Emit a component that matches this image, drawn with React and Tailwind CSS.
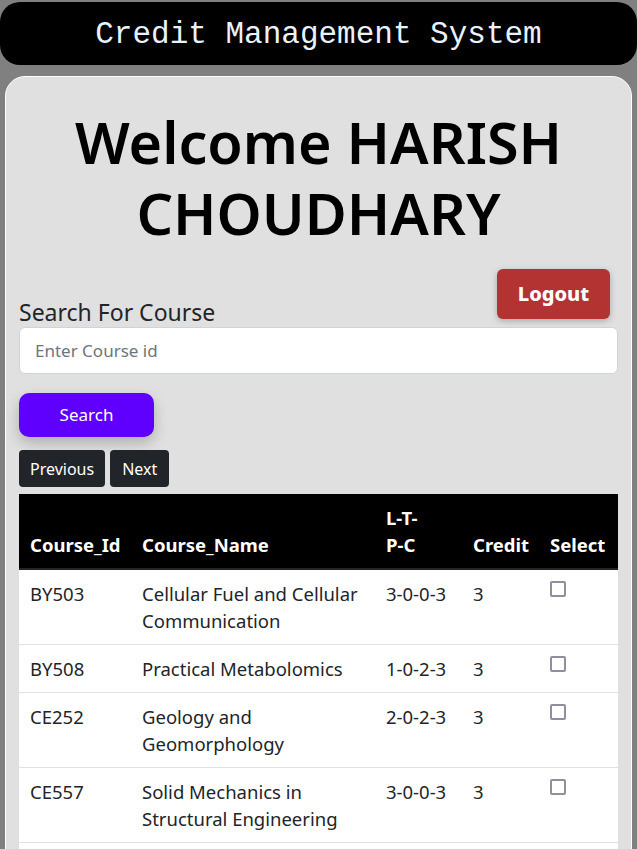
import React from "react";

const rows = [
  ["BY503", "Cellular Fuel and Cellular Communication", "3-0-0-3", "3"],
  ["BY508", "Practical Metabolomics", "1-0-2-3", "3"],
  ["CE252", "Geology and Geomorphology", "2-0-2-3", "3"],
  ["CE557", "Solid Mechanics in Structural Engineering", "3-0-0-3", "3"],
];

export default function App() {
  return (
    <div className="h-[849px] bg-[#808080] pt-[2px] overflow-hidden" style={{ fontFamily: '"Noto Sans", "Open Sans", sans-serif' }}>
      <header className="h-[63px] rounded-[20px] bg-black flex items-center justify-center pt-[4px]">
        <span className="text-[31px] text-[#e8f2ff]" style={{ fontFamily: '"Liberation Mono", "Courier New", monospace' }}>
          Credit Management System
        </span>
      </header>
      <main className="mt-[11px] mx-[5px] rounded-[20px] border border-white bg-[#e0e0e0] px-[13px] pt-[30px] pb-[20px] min-h-[800px]">
        <h1 className="text-center text-[57.5px] leading-[71px] font-semibold text-black">
          Welcome HARISH CHOUDHARY
        </h1>
        <div className="flex items-end justify-between mt-[20px]">
          <label className="text-[23px] leading-[34px] text-[#212529]">Search For Course</label>
          <button className="mb-[10px] mr-[8px] w-[113px] h-[50px] rounded-[6px] bg-[#b33232] text-white font-extrabold text-[20px] shadow-[0_2px_6px_rgba(0,0,0,0.25)]">
            Logout
          </button>
        </div>
        <input
          className="mt-[-2px] block w-full h-[47px] rounded-[6px] border border-[#ced4da] bg-white px-[15px] text-[17px] text-[#212529] placeholder:text-[#6c757d] outline-none"
          placeholder="Enter Course id"
        />
        <button className="mt-[19px] block w-[135px] h-[44px] rounded-[10px] bg-[#5f00ff] text-white text-[17px] shadow-[0_6px_14px_rgba(0,0,0,0.22)]">
          Search
        </button>
        <div className="mt-[13px] flex gap-[5px]">
          <button className="h-[37px] px-[11px] rounded-[4px] bg-[#212529] text-white text-[16px]">Previous</button>
          <button className="h-[37px] px-[12px] rounded-[4px] bg-[#212529] text-white text-[16px]">Next</button>
        </div>
        <table className="mt-[7px] w-full table-fixed border-collapse text-[18.5px] leading-[27px] text-[#212529]">
          <colgroup>
            <col className="w-[112px]" />
            <col className="w-[244px]" />
            <col className="w-[87px]" />
            <col className="w-[77px]" />
            <col />
          </colgroup>
          <thead>
            <tr className="bg-black text-white border-b-2 border-[#212529]">
              <th className="px-[11px] py-[10px] text-left align-bottom font-bold">Course_Id</th>
              <th className="px-[11px] py-[10px] text-left align-bottom font-bold">Course_Name</th>
              <th className="px-[11px] py-[10px] text-left align-bottom font-bold">
                <span className="inline-block w-[40px]">L-T-P-C</span>
              </th>
              <th className="px-[11px] py-[10px] text-left align-bottom font-bold">Credit</th>
              <th className="px-[11px] py-[10px] text-left align-bottom font-bold">Select</th>
            </tr>
          </thead>
          <tbody>
            {rows.map((r) => (
              <tr key={r[0]} className="bg-white border-b border-[#dee2e6]">
                <td className="px-[11px] py-[10px] align-top">{r[0]}</td>
                <td className="px-[11px] py-[10px] align-top">{r[1]}</td>
                <td className="px-[11px] py-[10px] align-top">{r[2]}</td>
                <td className="px-[11px] py-[10px] align-top">{r[3]}</td>
                <td className="px-[11px] py-[10px] align-top">
                  <span className="mt-[1px] block w-[16px] h-[16px] rounded-[2px] border-2 border-[#8f8f9d] bg-white" />
                </td>
              </tr>
            ))}
            <tr className="bg-white">
              <td colSpan={5} className="h-[40px]" />
            </tr>
          </tbody>
        </table>
      </main>
    </div>
  );
}
